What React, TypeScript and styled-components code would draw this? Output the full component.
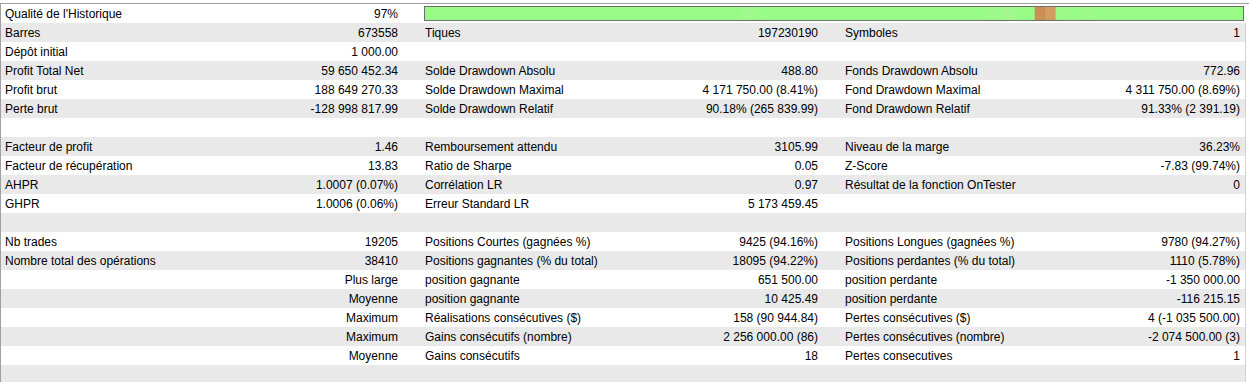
import React from "react";
import styled, { createGlobalStyle } from "styled-components";

const GlobalStyle = createGlobalStyle`
  html, body {
    margin: 0;
    padding: 0;
    background: #ffffff;
  }
  body {
    font-family: "Liberation Sans", Arial, sans-serif;
    font-size: 12px;
    color: #000000;
  }
`;

type CellData = [string, string] | null;
type RowData = { cells: CellData[] };

const rows: RowData[] = [
  { cells: [["Barres", "673558"], ["Tiques", "197230190"], ["Symboles", "1"]] },
  { cells: [["Dépôt initial", "1 000.00"], null, null] },
  { cells: [["Profit Total Net", "59 650 452.34"], ["Solde Drawdown Absolu", "488.80"], ["Fonds Drawdown Absolu", "772.96"]] },
  { cells: [["Profit brut", "188 649 270.33"], ["Solde Drawdown Maximal", "4 171 750.00 (8.41%)"], ["Fond Drawdown Maximal", "4 311 750.00 (8.69%)"]] },
  { cells: [["Perte brut", "-128 998 817.99"], ["Solde Drawdown Relatif", "90.18% (265 839.99)"], ["Fond Drawdown Relatif", "91.33% (2 391.19)"]] },
  { cells: [null, null, null] },
  { cells: [["Facteur de profit", "1.46"], ["Remboursement attendu", "3105.99"], ["Niveau de la marge", "36.23%"]] },
  { cells: [["Facteur de récupération", "13.83"], ["Ratio de Sharpe", "0.05"], ["Z-Score", "-7.83 (99.74%)"]] },
  { cells: [["AHPR", "1.0007 (0.07%)"], ["Corrélation LR", "0.97"], ["Résultat de la fonction OnTester", "0"]] },
  { cells: [["GHPR", "1.0006 (0.06%)"], ["Erreur Standard LR", "5 173 459.45"], null] },
  { cells: [null, null, null] },
  { cells: [["Nb trades", "19205"], ["Positions Courtes (gagnées %)", "9425 (94.16%)"], ["Positions Longues (gagnées %)", "9780 (94.27%)"]] },
  { cells: [["Nombre total des opérations", "38410"], ["Positions gagnantes (% du total)", "18095 (94.22%)"], ["Positions perdantes (% du total)", "1110 (5.78%)"]] },
  { cells: [["", "Plus large"], ["position gagnante", "651 500.00"], ["position perdante", "-1 350 000.00"]] },
  { cells: [["", "Moyenne"], ["position gagnante", "10 425.49"], ["position perdante", "-116 215.15"]] },
  { cells: [["", "Maximum"], ["Réalisations consécutives ($)", "158 (90 944.84)"], ["Pertes consécutives ($)", "4 (-1 035 500.00)"]] },
  { cells: [["", "Maximum"], ["Gains consécutifs (nombre)", "2 256 000.00 (86)"], ["Pertes consécutives (nombre)", "-2 074 500.00 (3)"]] },
  { cells: [["", "Moyenne"], ["Gains consécutifs", "18"], ["Pertes consecutives", "1"]] },
  { cells: [null, null, null] },
];

const rightPads = [23, 23, 5];

const Report = styled.div`
  margin-top: 3px;
  border-top: 1px solid #a0a0a0;
  border-left: 1px solid #a0a0a0;
  width: 1248px;
  height: 378px;
  overflow: hidden;
`;

const QualityRow = styled.div`
  display: grid;
  grid-template-columns: 420px 1fr;
  height: 19px;
  background: #ffffff;
`;

const Row = styled.div<{ $shaded: boolean }>`
  display: grid;
  grid-template-columns: 420px 420px 404px;
  width: 1244px;
  height: 19px;
  background: ${(p) => (p.$shaded ? "#e9e9e9" : "#ffffff")};
  border-right: 1px solid #d4d4d4;
`;

const Cell = styled.div<{ $pad: number }>`
  display: flex;
  align-items: center;
  justify-content: space-between;
  padding: 2px ${(p) => p.$pad}px 0 4px;
  white-space: nowrap;
  line-height: 17px;
`;

const Label = styled.span``;
const Value = styled.span``;

const BarCell = styled.div`
  display: flex;
  align-items: center;
  padding: 2px 5px 2px 3px;
`;

const QualityBar = styled.div`
  flex: 1;
  height: 15px;
  border: 1px solid #6d6d6d;
  box-sizing: border-box;
  background: #98fb86;
  display: flex;
`;

const segments = [
  { x: 316, w: 12, c: "#a0f98d" },
  { x: 328, w: 10, c: "#9cfa8a" },
  { x: 560, w: 12, c: "#9ef98a" },
  { x: 576, w: 14, c: "#a2f88e" },
  { x: 609, w: 11, c: "#cb8f55" },
  { x: 620, w: 10, c: "#d29c5f" },
  { x: 630, w: 12, c: "#9ef98b" },
  { x: 655, w: 14, c: "#9df98a" },
];

function Bar() {
  return (
    <QualityBar>
      <svg width="100%" height="13" viewBox="0 0 817 13" preserveAspectRatio="none">
        {segments.map((s, i) => (
          <rect key={i} x={s.x} y={0} width={s.w} height={13} fill={s.c} />
        ))}
      </svg>
    </QualityBar>
  );
}

export default function App() {
  return (
    <>
      <GlobalStyle />
      <Report>
        <QualityRow>
          <Cell $pad={23}>
            <Label>Qualité de l'Historique</Label>
            <Value>97%</Value>
          </Cell>
          <BarCell>
            <Bar />
          </BarCell>
        </QualityRow>
        {rows.map((r, i) => (
          <Row key={i} $shaded={i % 2 === 0}>
            {r.cells.map((c, j) => (
              <Cell key={j} $pad={rightPads[j]}>
                <Label>{c ? c[0] : ""}</Label>
                <Value>{c ? c[1] : ""}</Value>
              </Cell>
            ))}
          </Row>
        ))}
      </Report>
    </>
  );
}
